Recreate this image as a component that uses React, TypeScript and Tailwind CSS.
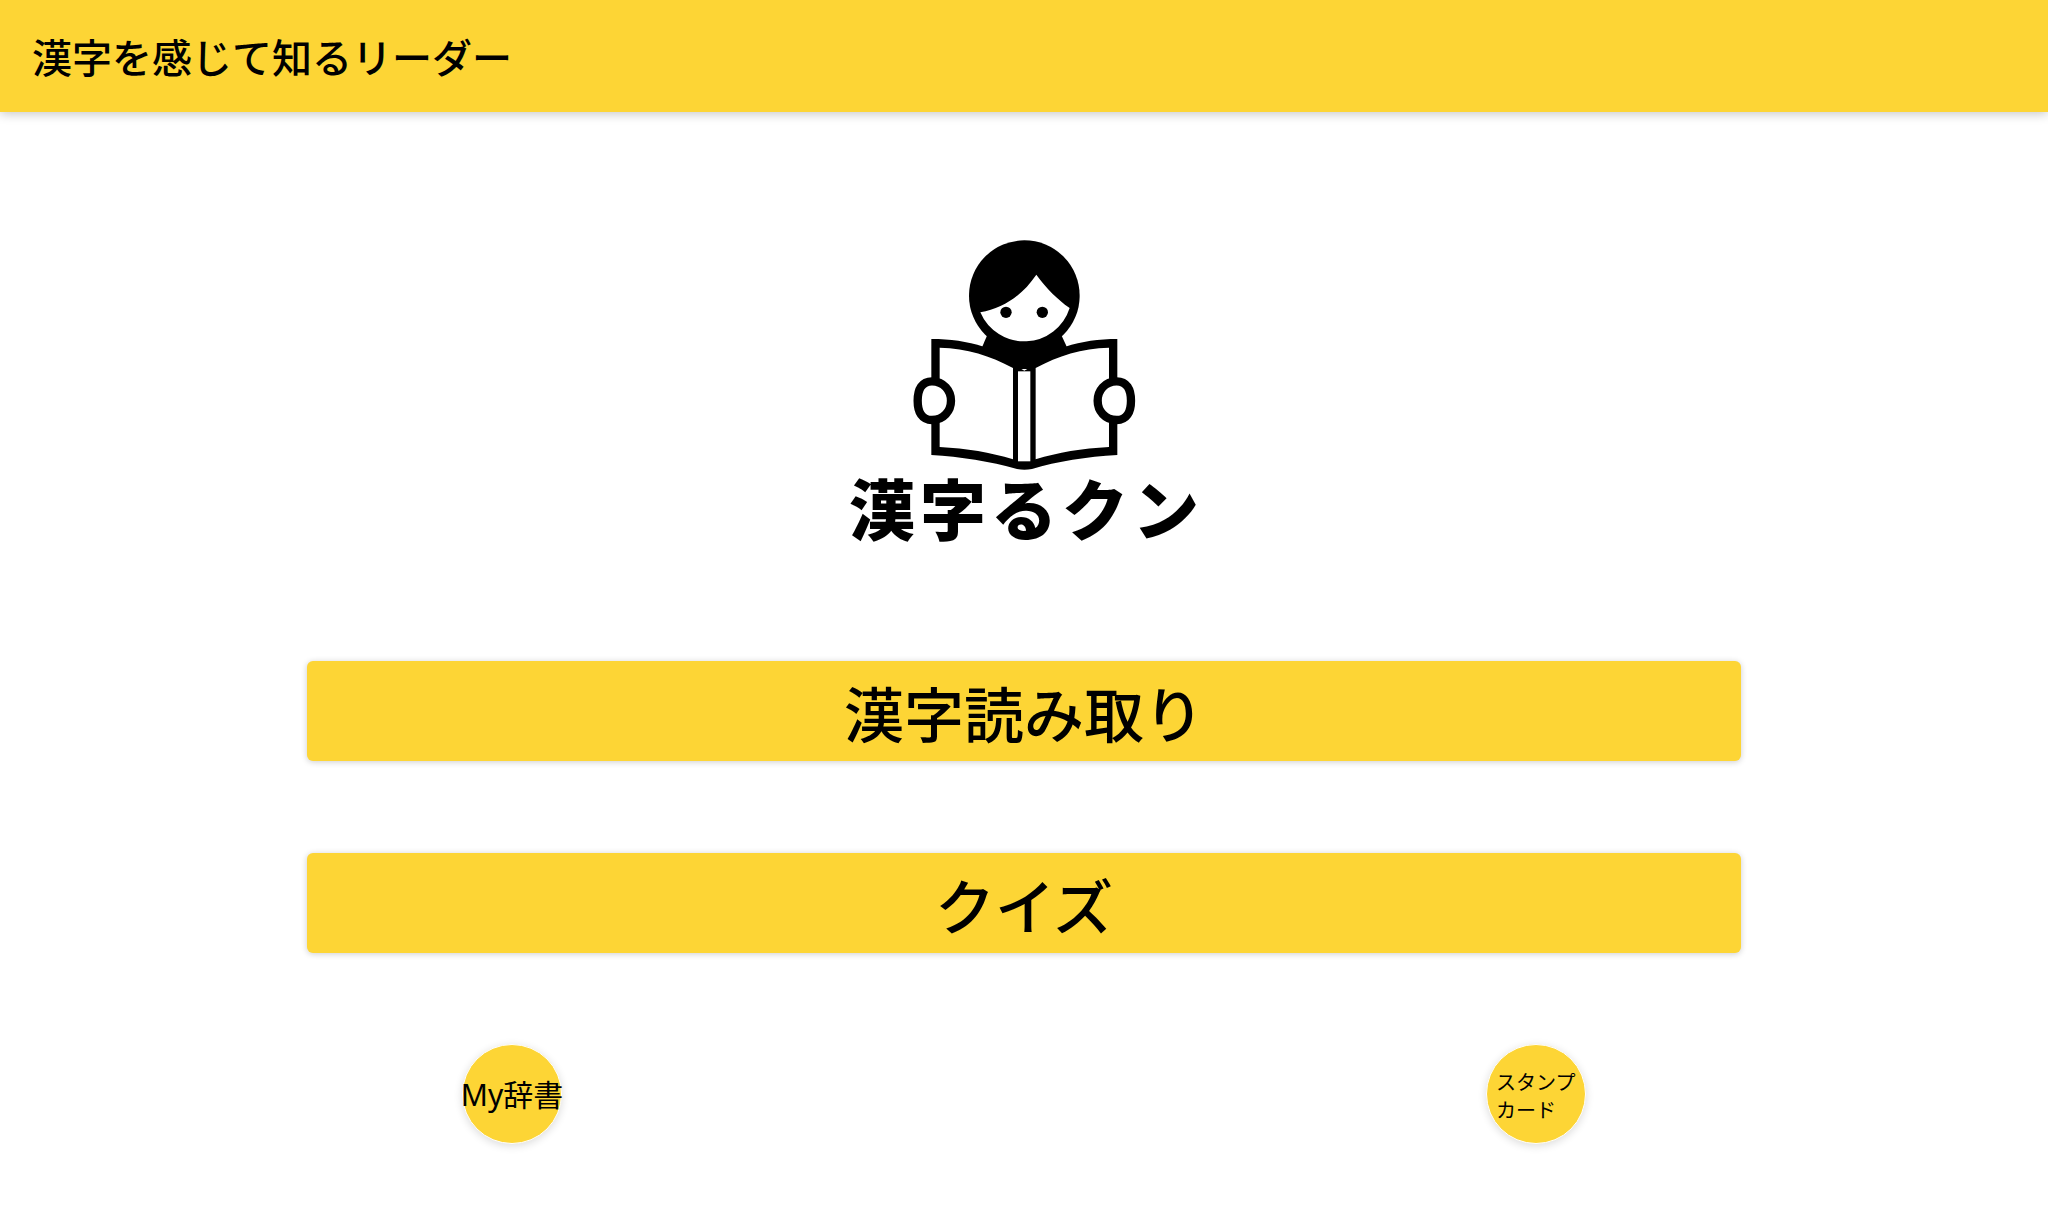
import React from "react";

const cjk = "font-['Noto_Sans','Noto_Sans_CJK_JP',sans-serif]";

function Logo() {
  return (
    <svg width="234.67" height="233.33" viewBox="200 55 704 700" className="block shrink-0">
      <path d="M440 345 L425 380 L520 445 L585 445 L680 380 L664 345 Z" fill="#000" />
      <circle cx="552" cy="225" r="166" fill="#000" />
      <path
        d="M420 275 C490 262 545 225 588 162 C620 205 650 235 688 262 A143 143 0 0 1 420 275 Z"
        fill="#fff"
      />
      <circle cx="497" cy="275" r="17" fill="#000" />
      <circle cx="606" cy="275" r="17" fill="#000" />
      <path
        d="M273 355 C330 355 380 362 430 378 L552 450 L675 378 C725 362 775 355 831 355 L831 703 C740 708 650 722 575 745 Q552 750 530 745 C450 722 360 708 273 703 Z"
        fill="#000"
      />
      <path d="M298 381 C380 383 450 405 518 442 L518 716 C450 695 380 683 298 679 Z" fill="#fff" />
      <path d="M806 381 C724 383 654 405 586 442 L586 716 C654 695 724 683 806 679 Z" fill="#fff" />
      <rect x="533" y="452" width="37" height="270" fill="#fff" />
      <path
        d="M275 482 C310 482 332 510 332 540 C332 570 310 598 275 598 C245 598 232 575 232 540 C232 505 245 482 275 482 Z"
        fill="#fff"
        stroke="#000"
        strokeWidth="25"
      />
      <path
        d="M829 482 C794 482 772 510 772 540 C772 570 794 598 829 598 C859 598 872 575 872 540 C872 505 859 482 829 482 Z"
        fill="#fff"
        stroke="#000"
        strokeWidth="25"
      />
    </svg>
  );
}

const barShadow = "shadow-[0_1px_6px_0_rgba(0,0,0,0.2)]";
const roundShadow = "shadow-[0_2px_8px_0_rgba(0,0,0,0.14)]";

function WideButton({ label }: { label: string }) {
  return (
    <button
      className={`flex h-[100px] w-[1434px] items-center justify-center rounded-[6px] bg-[#fdd535] pt-[8px] text-[60px] font-medium leading-none text-black ${barShadow}`}
    >
      {label}
    </button>
  );
}

export default function App() {
  return (
    <div className={`h-[1220px] w-[2048px] overflow-hidden bg-white text-black ${cjk}`}>
      <header className="relative flex h-[112px] items-center bg-[#fdd535] pl-[32px] pt-[3px] shadow-[0_2px_10px_0_rgba(0,0,0,0.22)]">
        <h1 className="text-[40px] font-medium leading-none">漢字を感じて知るリーダー</h1>
      </header>
      <main className="flex flex-col items-center pt-[127px]">
        <Logo />
        <div className="mt-[-3px] h-[80px] whitespace-nowrap pl-[5px] text-[66px] font-black leading-[80px] tracking-[5px]">
          漢字るクン
        </div>
        <div className="mt-[112px] flex flex-col gap-[92px]">
          <WideButton label="漢字読み取り" />
          <WideButton label="クイズ" />
        </div>
        <div className="mt-[91px] flex w-[1124px] justify-between">
          <button
            className={`flex h-[100px] w-[100px] items-center justify-center whitespace-nowrap rounded-full border border-white bg-[#fdd535] pt-[2px] text-[30px] leading-none ${roundShadow}`}
          >
            My辞書
          </button>
          <button
            className={`flex h-[100px] w-[100px] items-center rounded-full border border-white bg-[#fdd535] pl-[9px] pt-[6px] text-left text-[20px] leading-[28px] ${roundShadow}`}
          >
            <span>
              スタンプ
              <br />
              カード
            </span>
          </button>
        </div>
      </main>
    </div>
  );
}
